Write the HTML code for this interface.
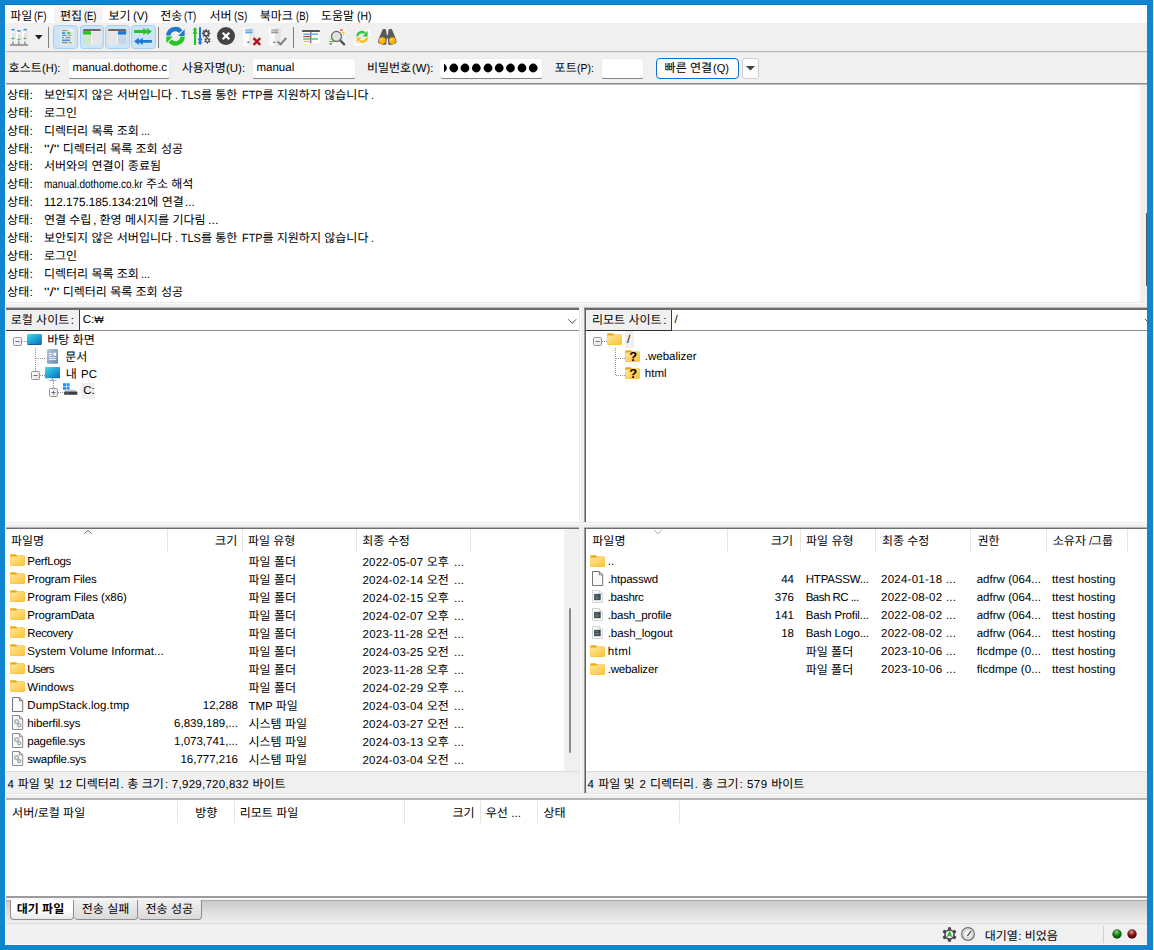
<!DOCTYPE html>
<html lang="ko"><head><meta charset="utf-8"><title>FileZilla</title>
<style>
html,body{margin:0;padding:0}
body{width:1154px;height:950px;overflow:hidden;position:relative;background:#1185cf;font-family:"Liberation Sans","Noto Sans CJK KR",sans-serif;font-size:11.5px;color:#000;text-rendering:geometricPrecision}
.b{position:absolute;box-sizing:border-box}
.t{position:absolute;white-space:nowrap;height:16px;line-height:16px;font-size:11.5px}
.k{display:inline-block;vertical-align:baseline;white-space:nowrap;letter-spacing:0;line-height:16px;font-size:12px;font-family:"Liberation Sans","Noto Sans CJK KR",sans-serif}
.lg{font-size:12px}
.lx{display:inline-block;transform-origin:0 50%}
.bd{font-weight:bold}
.mn{font-size:12px}
svg{overflow:visible}
</style></head><body>
<div class="b " style="left:0px;top:4px;width:1154px;height:1px;background:#0a7ccb;"></div>
<div class="b " style="left:5px;top:5px;width:1142px;height:940px;background:#ffffff;"></div>
<div class="b " style="left:1153px;top:0px;width:1px;height:950px;background:#d7e9f6;"></div>
<div class="b " style="left:53.5px;top:6.5px;width:49px;height:16.5px;background:#f3f3f3;border-radius:3px"></div>
<div class="t mn" style="top:8.0px;left:10.3px;"><span class="k" style="width:24.1px">파일</span><span class="lx" style="transform:scaleX(0.822);margin-right:-2.72px">(F)</span></div>
<div class="t mn" style="top:8.0px;left:60.0px;"><span class="k" style="width:24.1px">편집</span><span class="lx" style="transform:scaleX(0.780);margin-right:-3.52px">(E)</span></div>
<div class="t mn" style="top:8.0px;left:108.5px;"><span class="k" style="width:24.1px">보기</span><span class="lx" style="transform:scaleX(0.938);margin-right:-0.99px">(V)</span></div>
<div class="t mn" style="top:8.0px;left:160.2px;"><span class="k" style="width:24.1px">전송</span><span class="lx" style="transform:scaleX(0.790);margin-right:-3.22px">(T)</span></div>
<div class="t mn" style="top:8.0px;left:209.5px;"><span class="k" style="width:24.1px">서버</span><span class="lx" style="transform:scaleX(0.832);margin-right:-2.69px">(S)</span></div>
<div class="t mn" style="top:8.0px;left:259.7px;"><span class="k" style="width:36.2px">북마크</span><span class="lx" style="transform:scaleX(0.788);margin-right:-3.39px">(B)</span></div>
<div class="t mn" style="top:8.0px;left:321.0px;"><span class="k" style="width:36.2px">도움말</span><span class="lx" style="transform:scaleX(0.864);margin-right:-2.26px">(H)</span></div>
<div class="b " style="left:6px;top:23px;width:1141px;height:28px;background:#f0f0f0;"></div>
<div class="b " style="left:6px;top:51px;width:1141px;height:1px;background:#b8b8b8;"></div>
<div class="b " style="left:6px;top:52px;width:1141px;height:1px;background:#e4e4e4;"></div>
<svg class="b" style="left:10px;top:28px;" width="18" height="18" viewBox="0 0 18 18"><rect x="0.2" y="0.1" width="5.4" height="11.2" fill="#fdfdfd"/><rect x="3.8000000000000003" y="0.1" width="1.8" height="11.2" fill="#e4e4e4"/><ellipse cx="2.9000000000000004" cy="1.7000000000000002" rx="1.9" ry="0.9" fill="#3f8fe3"/><path d="M2.9000000000000004 5.1V9.4" stroke="#9a9a9a" stroke-width="0.6"/><path d="M0.5 10.4H5.4" stroke="#b5b5b5" stroke-width="0.7"/><circle cx="2.9000000000000004" cy="10.4" r="1" fill="#2fc443"/><path d="M2.9000000000000004 13.4V16.4" stroke="#6a6a6a" stroke-width="1.1"/><rect x="6.1" y="1.3" width="5.4" height="11.2" fill="#fdfdfd"/><rect x="9.7" y="1.3" width="1.8" height="11.2" fill="#e4e4e4"/><ellipse cx="8.8" cy="2.9000000000000004" rx="1.9" ry="0.9" fill="#3f8fe3"/><path d="M8.8 6.3V10.600000000000001" stroke="#9a9a9a" stroke-width="0.6"/><path d="M6.3999999999999995 11.600000000000001H11.3" stroke="#b5b5b5" stroke-width="0.7"/><circle cx="8.8" cy="11.600000000000001" r="1" fill="#2fc443"/><path d="M8.8 13.4V16.4" stroke="#6a6a6a" stroke-width="1.1"/><rect x="12.3" y="0.1" width="5.4" height="11.2" fill="#fdfdfd"/><rect x="15.9" y="0.1" width="1.8" height="11.2" fill="#e4e4e4"/><ellipse cx="15.0" cy="1.7000000000000002" rx="1.9" ry="0.9" fill="#3f8fe3"/><path d="M15.0 5.1V9.4" stroke="#9a9a9a" stroke-width="0.6"/><path d="M12.600000000000001 10.4H17.5" stroke="#b5b5b5" stroke-width="0.7"/><circle cx="15.0" cy="10.4" r="1" fill="#2fc443"/><path d="M15.0 13.4V16.4" stroke="#6a6a6a" stroke-width="1.1"/><rect x="0" y="16.2" width="18" height="1.6" fill="#8d8d8d"/></svg>
<svg class="b" style="left:35px;top:34.8px;" width="8" height="5" viewBox="0 0 8 5"><path d="M0 0H7.6L3.8 4.4Z" fill="#1e1e1e"/></svg>
<div class="b " style="left:48px;top:27px;width:1px;height:20.5px;background:#7e7e7e;"></div>
<div class="b " style="left:158px;top:27px;width:1px;height:20.5px;background:#7e7e7e;"></div>
<div class="b " style="left:293px;top:27px;width:1px;height:20.5px;background:#7e7e7e;"></div>
<div class="b " style="left:53.3px;top:25px;width:25.2px;height:23.5px;background:#cce4f7;border:1px solid #a3d0f7;border-radius:3.5px"></div>
<div class="b " style="left:79.7px;top:25px;width:24.6px;height:23.5px;background:#cce4f7;border:1px solid #a3d0f7;border-radius:3.5px"></div>
<div class="b " style="left:105.2px;top:25px;width:24.5px;height:23.5px;background:#cce4f7;border:1px solid #a3d0f7;border-radius:3.5px"></div>
<div class="b " style="left:130.8px;top:25px;width:24.9px;height:23.5px;background:#cce4f7;border:1px solid #a3d0f7;border-radius:3.5px"></div>
<svg class="b" style="left:60px;top:27.9px;" width="15" height="18" viewBox="0 0 15 18"><path d="M0.2 0.6Q0.2 0 0.8 0H11L14.3 3.3V17Q14.3 17.7 13.7 17.7H0.8Q0.2 17.7 0.2 17Z" fill="#e6e6e6"/><path d="M11 0V3.3H14.3Z" fill="#f8f8f8"/><path d="M2 2.6H7.6" stroke="#8a8a8a" stroke-width="1"/><path d="M2 5.1H5.2" stroke="#3f8fe3" stroke-width="1.9"/><path d="M6.9 5.1H10.4" stroke="#35d04a" stroke-width="1.9"/><path d="M2 7.4H6.7" stroke="#3f8fe3" stroke-width="1.1"/><path d="M8.2 7.4H11.4" stroke="#8a8a8a" stroke-width="1"/><path d="M2 9.7H3.9" stroke="#2fc443" stroke-width="1.2"/><path d="M5.7 9.7H10.2" stroke="#777" stroke-width="1"/><path d="M2 12.3H10.2" stroke="#3f8fe3" stroke-width="1.6"/><path d="M2 14.7H7.7" stroke="#6f6f6f" stroke-width="1"/><path d="M9.1 14.7H11.6" stroke="#2fc443" stroke-width="1.2"/></svg>
<svg class="b" style="left:83px;top:28.9px;" width="18" height="15.4" viewBox="0 0 18 15.4"><rect x="0" y="0" width="17.9" height="15.3" rx="1.2" fill="#fff"/><path d="M0 1.2Q0 0 1.2 0H16.7Q17.9 0 17.9 1.2V1.9H0Z" fill="#6a6a6a"/><rect x="0" y="2.1" width="8" height="3.6" fill="#24c524"/><rect x="0" y="6.3" width="8" height="9" fill="#cfe5c9"/><rect x="8.8" y="2.1" width="9.1" height="13.2" fill="#e7e7e7"/></svg>
<svg class="b" style="left:108.3px;top:28.9px;" width="18.3" height="15.4" viewBox="0 0 18.3 15.4"><rect x="0" y="0" width="18.2" height="15.3" rx="1.2" fill="#fff"/><path d="M0 1.2Q0 0 1.2 0H17Q18.2 0 18.2 1.2V1.9H0Z" fill="#6a6a6a"/><rect x="0" y="2.1" width="9" height="13.2" fill="#e7e7e7"/><rect x="9.8" y="2.1" width="8.4" height="3.6" fill="#1f78d1"/><rect x="9.8" y="6.3" width="8.4" height="9" fill="#c6d6e6"/></svg>
<svg class="b" style="left:133.9px;top:28.2px;" width="18" height="17" viewBox="0 0 18 17"><path d="M0 2.1H9.2V0L13 2.6V0L17.9 3.55L13 7.1V4.5L9.2 7.1V5H0Z" fill="#24c524"/><path d="M17.9 11.9H8.7V9.8L4.9 12.4V9.8L0 13.35L4.9 16.9V14.3L8.7 16.9V14.8H17.9Z" fill="#1f78d1"/></svg>
<svg class="b" style="left:165.5px;top:27.3px;" width="19" height="18.4" viewBox="0 0 19 18.4"><path d="M2.4 8.7A7 7 0 0 1 14.8 4.6" fill="none" stroke="#1f78d1" stroke-width="4.4"/><path d="M18.7 2.2V8.9H12.2Z" fill="#1f78d1"/><path d="M16.6 9.7A7 7 0 0 1 4.2 13.8" fill="none" stroke="#24c524" stroke-width="4.4"/><path d="M0.3 16.2V9.5H6.8Z" fill="#24c524"/></svg>
<svg class="b" style="left:191.5px;top:27.3px;" width="20" height="18.4" viewBox="0 0 20 18.4"><path d="M3.05 0L5.5 3.2H4.1V4L5.5 6.8H4.1V18H2V6.8H0.6L2 4V3.2H0.6Z" fill="#24c524"/><path d="M8.05 18.2L5.6 15H7V14.2L5.6 11.4H7V0.2H9.1V11.4H10.5L9.1 14.2V15H10.5Z" fill="#1f78d1"/><g transform="translate(14.2 6.4)"><rect x="-0.8" y="-4.2" width="1.6" height="2" transform="rotate(0)" fill="#4a4a4a"/><rect x="-0.8" y="-4.2" width="1.6" height="2" transform="rotate(45)" fill="#4a4a4a"/><rect x="-0.8" y="-4.2" width="1.6" height="2" transform="rotate(90)" fill="#4a4a4a"/><rect x="-0.8" y="-4.2" width="1.6" height="2" transform="rotate(135)" fill="#4a4a4a"/><rect x="-0.8" y="-4.2" width="1.6" height="2" transform="rotate(180)" fill="#4a4a4a"/><rect x="-0.8" y="-4.2" width="1.6" height="2" transform="rotate(225)" fill="#4a4a4a"/><rect x="-0.8" y="-4.2" width="1.6" height="2" transform="rotate(270)" fill="#4a4a4a"/><rect x="-0.8" y="-4.2" width="1.6" height="2" transform="rotate(315)" fill="#4a4a4a"/><circle r="2.9" fill="#4a4a4a"/><circle r="1.5" fill="#f0f0f0"/></g><g transform="translate(15.4 13.4)"><rect x="-0.7" y="-3.2" width="1.4" height="1.6" transform="rotate(0)" fill="#4a4a4a"/><rect x="-0.7" y="-3.2" width="1.4" height="1.6" transform="rotate(60)" fill="#4a4a4a"/><rect x="-0.7" y="-3.2" width="1.4" height="1.6" transform="rotate(120)" fill="#4a4a4a"/><rect x="-0.7" y="-3.2" width="1.4" height="1.6" transform="rotate(180)" fill="#4a4a4a"/><rect x="-0.7" y="-3.2" width="1.4" height="1.6" transform="rotate(240)" fill="#4a4a4a"/><rect x="-0.7" y="-3.2" width="1.4" height="1.6" transform="rotate(300)" fill="#4a4a4a"/><circle r="2.2" fill="#4a4a4a"/><circle r="1.1" fill="#f0f0f0"/></g></svg>
<svg class="b" style="left:217.3px;top:27.4px;" width="18" height="18" viewBox="0 0 18 18"><circle cx="9" cy="9" r="9" fill="#444"/><path d="M5.7 5.7L12.3 12.3M12.3 5.7L5.7 12.3" stroke="#fff" stroke-width="2.3"/></svg>
<svg class="b" style="left:243.2px;top:28.2px;" width="19" height="18" viewBox="0 0 19 18"><rect x="0" y="0" width="12.5" height="18" fill="#fcfcfc"/><rect x="6" y="0" width="6.5" height="18" fill="#e9e9e9"/><path d="M2.2 2H9.4" stroke="#5da3ea" stroke-width="1.3"/><path d="M2.2 4.4H9.4" stroke="#5da3ea" stroke-width="1.9"/><path d="M4.4 14.3H6.2" stroke="#444" stroke-width="1.2"/><path d="M10.6 10.2L17.2 16.8M17.2 10.2L10.6 16.8" stroke="#b5121b" stroke-width="2.4"/></svg>
<svg class="b" style="left:269px;top:28.2px;" width="19" height="18" viewBox="0 0 19 18"><rect x="0" y="0" width="12.5" height="18" fill="#fafafa"/><rect x="6" y="0" width="6.5" height="18" fill="#e6e6e6"/><path d="M2.2 2H9.4" stroke="#9a9a9a" stroke-width="1.3"/><path d="M2.2 4.4H9.4" stroke="#9a9a9a" stroke-width="1.9"/><path d="M4.4 14.3H6.2" stroke="#555" stroke-width="1.2"/><path d="M8.6 13.6L11.6 16.4L17.2 10" fill="none" stroke="#7d7d7d" stroke-width="2"/></svg>
<svg class="b" style="left:302px;top:29.8px;" width="18.2" height="13.6" viewBox="0 0 18.2 13.6"><rect x="0" y="0.5" width="18" height="12.8" rx="1" fill="#fff"/><path d="M0 1.4Q0 0 1.2 0H16.8Q18 0 18 1.4V2.1H0Z" fill="#555"/><path d="M8.8 1.8V13.3" stroke="#444" stroke-width="1"/><path d="M1.2 4.2H16" stroke="#5da3ea" stroke-width="1.4"/><path d="M1.2 6.6H8.4" stroke="#c62a33" stroke-width="1.1"/><path d="M1.2 9H16" stroke="#4cc94f" stroke-width="1.5"/><path d="M1.2 11.5H8.4" stroke="#fbb900" stroke-width="1.2"/></svg>
<svg class="b" style="left:327.5px;top:27.6px;" width="19" height="18.5" viewBox="0 0 19 18.5"><rect x="10.8" y="0.3" width="7.4" height="8.2" fill="#fdfdfd" stroke="#e2e2e2" stroke-width="0.5"/><path d="M12 2H14.8" stroke="#c62a33" stroke-width="1.2"/><path d="M13.6 4.3H17" stroke="#fbc02d" stroke-width="1.3"/><path d="M14.8 6.4H16.4" stroke="#4cc94f" stroke-width="1.1"/><rect x="0.3" y="9.6" width="8.6" height="8.6" fill="#fdfdfd" stroke="#e2e2e2" stroke-width="0.5"/><path d="M1.2 11.2H3.4" stroke="#fbc02d" stroke-width="1.2"/><path d="M1.2 13.6H6" stroke="#2fc443" stroke-width="1.3"/><path d="M1.6 16H4" stroke="#c62a33" stroke-width="1.3"/><circle cx="8.5" cy="8.4" r="5" fill="#e2e2e2" stroke="#6b6b6b" stroke-width="1.3"/><path d="M12.3 12.4L16.8 17" stroke="#4a4a4a" stroke-width="2.2"/></svg>
<svg class="b" style="left:353px;top:27.6px;" width="19" height="18.5" viewBox="0 0 19 18.5"><rect x="9.6" y="0.3" width="8.8" height="8.2" fill="#fdfdfd" stroke="#e2e2e2" stroke-width="0.5"/><path d="M11.6 2H14.4M11.6 4H15.8" stroke="#dedede" stroke-width="0.8"/><rect x="0.2" y="9.6" width="8.8" height="8.6" fill="#fdfdfd" stroke="#e2e2e2" stroke-width="0.5"/><path d="M1.6 12.4H5M1.6 15.2H6" stroke="#dedede" stroke-width="0.8"/><path d="M4.4 8.2A4.6 4.6 0 0 1 12 5.2" fill="none" stroke="#2fc443" stroke-width="2.3"/><path d="M14.6 3V8.4H9.4Z" fill="#2fc443"/><path d="M13.8 9.6A4.6 4.6 0 0 1 6.2 12.6" fill="none" stroke="#fbbd18" stroke-width="2.3"/><path d="M3.6 14.8V9.4H8.8Z" fill="#fbbd18"/></svg>
<svg class="b" style="left:378.4px;top:28.6px;" width="18.6" height="15.8" viewBox="0 0 18.6 15.8"><path d="M4.2 1.4Q4.5 0 5.8 0H6.6Q8 0 8.2 1.4L8.8 6H9.8L10.4 1.4Q10.6 0 12 0H12.8Q14.1 0 14.4 1.4L18.2 10.4Q18.9 12.6 17.8 14.2L14 15.7H10.4L9.8 9.2H8.8L8.2 15.7H4.6L0.8 14.2Q-0.3 12.6 0.4 10.4Z" fill="#5a5a5a"/><circle cx="4.2" cy="11.6" r="3.4" fill="#fbb400"/><circle cx="14.4" cy="11.6" r="3.4" fill="#fbb400"/><circle cx="3.3" cy="10.6" r="1.1" fill="#ffe07a"/><circle cx="13.5" cy="10.6" r="1.1" fill="#ffe07a"/></svg>
<div class="b " style="left:6px;top:53px;width:1141px;height:30px;background:#f0f0f0;"></div>
<div class="b " style="left:6px;top:83px;width:1141px;height:1px;background:#8c8c8c;"></div>
<div class="b " style="left:6px;top:84px;width:1141px;height:1px;background:#bdbdbd;"></div>
<div class="t " style="top:60.0px;left:8.6px;"><span class="k" style="width:33.6px">호스트</span><span class="lx" style="transform:scaleX(0.960);margin-right:-0.77px">(H):</span></div>
<div class="b " style="left:68px;top:57.5px;width:102px;height:21px;background:#ffffff;border:1px solid #ececec;border-bottom:1px solid #868686;border-radius:3px"></div>
<div class="t " style="top:60.0px;left:72.5px;">manual.dothome.c</div>
<div class="t " style="top:60.0px;left:181.7px;"><span class="k" style="width:44.8px">사용자명</span><span class="lx" style="transform:scaleX(0.996);margin-right:-0.07px">(U):</span></div>
<div class="b " style="left:251.5px;top:57.5px;width:104px;height:21px;background:#ffffff;border:1px solid #ececec;border-bottom:1px solid #868686;border-radius:3px"></div>
<div class="t " style="top:60.0px;left:256.5px;">manual</div>
<div class="t " style="top:60.0px;left:367.0px;"><span class="k" style="width:44.8px">비밀번호</span><span class="lx" style="transform:scaleX(0.985);margin-right:-0.32px">(W):</span></div>
<div class="b " style="left:439.5px;top:57.5px;width:103.5px;height:21px;background:#ffffff;border:1px solid #ececec;border-bottom:1px solid #868686;border-radius:3px"></div>
<svg class="b" style="left:440px;top:57.5px;overflow:hidden" width="102" height="20" viewBox="0 0 102 20"><g fill="#000"><circle cx="2.5" cy="10" r="4.4"/><circle cx="13.8" cy="10" r="4.4"/><circle cx="25.0" cy="10" r="4.4"/><circle cx="36.3" cy="10" r="4.4"/><circle cx="48.0" cy="10" r="4.4"/><circle cx="59.2" cy="10" r="4.4"/><circle cx="70.5" cy="10" r="4.4"/><circle cx="82.0" cy="10" r="4.4"/><circle cx="93.2" cy="10" r="4.4"/></g><rect x="0" y="2" width="4" height="16" fill="#fff"/></svg>
<div class="t " style="top:60.0px;left:554.6px;"><span class="k" style="width:22.4px">포트</span><span class="lx" style="transform:scaleX(0.918);margin-right:-1.52px">(P):</span></div>
<div class="b " style="left:600.5px;top:57.5px;width:43px;height:21px;background:#ffffff;border:1px solid #ececec;border-bottom:1px solid #868686;border-radius:3px"></div>
<div class="b " style="left:655.5px;top:57.5px;width:83.5px;height:21px;background:#fdfdfd;border:1.5px solid #0a6fc9;border-radius:4px"></div>
<div class="t " style="top:60.0px;left:664.6px;"><span class="k" style="width:48.8px">빠른 연결</span><span class="lx" style="transform:scaleX(0.963);margin-right:-0.61px">(Q)</span></div>
<div class="b " style="left:741.5px;top:57.5px;width:17px;height:21px;background:#fdfdfd;border:1px solid #d0d0d0;border-radius:3px"></div>
<svg class="b" style="left:745.5px;top:65.5px;" width="9" height="5" viewBox="0 0 9 5"><path d="M0 0H9L4.5 4.6Z" fill="#444"/></svg>
<div class="b " style="left:1140px;top:85px;width:7px;height:217px;background:#f0f0f0;"></div>
<div class="b " style="left:1146px;top:213px;width:1px;height:73px;background:#5a5a5a;"></div>
<div class="t lg" style="top:87.0px;left:7.1px;"><span class="k" style="width:22.4px">상태</span>:</div>
<div class="t lg" style="top:87.0px;left:43.9px;"><span class="k" style="width:131.2px">보안되지 않은 서버입니다</span><span class="lx" style="transform:scaleX(0.906);margin-right:-2.67px">. TLS</span><span class="k" style="width:37.6px">를 통한</span> <span class="lx" style="transform:scaleX(0.906);margin-right:-2.12px">FTP</span><span class="k" style="width:108.8px">를 지원하지 않습니다</span><span class="lx" style="transform:scaleX(0.906);margin-right:-0.31px">.</span></div>
<div class="t lg" style="top:105.0px;left:7.1px;"><span class="k" style="width:22.4px">상태</span>:</div>
<div class="t lg" style="top:105.0px;left:43.9px;"><span class="k" style="width:33.6px">로그인</span></div>
<div class="t lg" style="top:123.0px;left:7.1px;"><span class="k" style="width:22.4px">상태</span>:</div>
<div class="t lg" style="top:123.0px;left:43.9px;"><span class="k" style="width:97.6px">디렉터리 목록 조회</span><span class="lx" style="transform:scaleX(0.909);margin-right:-0.91px">...</span></div>
<div class="t lg" style="top:141.0px;left:7.1px;"><span class="k" style="width:22.4px">상태</span>:</div>
<div class="t lg" style="top:141.0px;left:43.9px;"><span class="lx" style="transform:scaleX(1.300);margin-right:3.56px">"/"</span> <span class="k" style="width:124.0px">디렉터리 목록 조회 성공</span></div>
<div class="t lg" style="top:158.0px;left:7.1px;"><span class="k" style="width:22.4px">상태</span>:</div>
<div class="t lg" style="top:158.0px;left:43.9px;"><span class="k" style="width:120.0px">서버와의 연결이 종료됨</span></div>
<div class="t lg" style="top:176.0px;left:7.1px;"><span class="k" style="width:22.4px">상태</span>:</div>
<div class="t lg" style="top:176.0px;left:43.9px;"><span class="lx" style="transform:scaleX(0.831);margin-right:-20.08px">manual.dothome.co.kr</span> <span class="k" style="width:48.8px">주소 해석</span></div>
<div class="t lg" style="top:194.0px;left:7.1px;"><span class="k" style="width:22.4px">상태</span>:</div>
<div class="t lg" style="top:194.0px;left:43.9px;"><span class="lx" style="transform:scaleX(0.977);margin-right:-2.47px">112.175.185.134:21</span><span class="k" style="width:37.6px">에 연결</span><span class="lx" style="transform:scaleX(0.977);margin-right:-0.23px">...</span></div>
<div class="t lg" style="top:212.0px;left:7.1px;"><span class="k" style="width:22.4px">상태</span>:</div>
<div class="t lg" style="top:212.0px;left:43.9px;"><span class="k" style="width:48.8px">연결 수립</span><span class="lx" style="transform:scaleX(1.060);margin-right:0.20px">,</span> <span class="k" style="width:108.8px">환영 메시지를 기다림</span><span class="lx" style="transform:scaleX(1.060);margin-right:0.60px">...</span></div>
<div class="t lg" style="top:230.0px;left:7.1px;"><span class="k" style="width:22.4px">상태</span>:</div>
<div class="t lg" style="top:230.0px;left:43.9px;"><span class="k" style="width:131.2px">보안되지 않은 서버입니다</span><span class="lx" style="transform:scaleX(0.906);margin-right:-2.67px">. TLS</span><span class="k" style="width:37.6px">를 통한</span> <span class="lx" style="transform:scaleX(0.906);margin-right:-2.12px">FTP</span><span class="k" style="width:108.8px">를 지원하지 않습니다</span><span class="lx" style="transform:scaleX(0.906);margin-right:-0.31px">.</span></div>
<div class="t lg" style="top:248.0px;left:7.1px;"><span class="k" style="width:22.4px">상태</span>:</div>
<div class="t lg" style="top:248.0px;left:43.9px;"><span class="k" style="width:33.6px">로그인</span></div>
<div class="t lg" style="top:266.0px;left:7.1px;"><span class="k" style="width:22.4px">상태</span>:</div>
<div class="t lg" style="top:266.0px;left:43.9px;"><span class="k" style="width:97.6px">디렉터리 목록 조회</span><span class="lx" style="transform:scaleX(0.909);margin-right:-0.91px">...</span></div>
<div class="t lg" style="top:284.0px;left:7.1px;"><span class="k" style="width:22.4px">상태</span>:</div>
<div class="t lg" style="top:284.0px;left:43.9px;"><span class="lx" style="transform:scaleX(1.300);margin-right:3.56px">"/"</span> <span class="k" style="width:124.0px">디렉터리 목록 조회 성공</span></div>
<div class="b " style="left:6px;top:302px;width:1141px;height:6px;background:#f0f0f0;"></div>
<div class="b " style="left:6px;top:302px;width:1141px;height:1px;background:#e9e9e9;"></div>
<div class="b " style="left:6px;top:303px;width:1141px;height:1px;background:#fbfbfb;"></div>
<div class="b " style="left:6px;top:307px;width:573px;height:1px;background:#bdbdbd;"></div>
<div class="b " style="left:6px;top:308px;width:573px;height:2px;background:#6c6c6c;"></div>
<div class="b " style="left:584px;top:307px;width:563px;height:1px;background:#bdbdbd;"></div>
<div class="b " style="left:584px;top:308px;width:563px;height:2px;background:#6c6c6c;"></div>
<div class="b " style="left:6px;top:310px;width:73px;height:20px;background:#f0f0f0;"></div>
<div class="t " style="top:312.0px;left:10.7px;"><span class="k" style="width:60.0px">로컬 사이트</span>:</div>
<div class="b " style="left:6px;top:330px;width:573px;height:1px;background:#8c8c8c;"></div>
<div class="b " style="left:6px;top:330px;width:74px;height:1px;background:#2e2e2e;"></div>
<div class="b " style="left:79px;top:310px;width:1px;height:21px;background:#3c3c3c;"></div>
<div class="t " style="top:312.0px;left:82.8px;">C:<span style="font-size:10px;font-weight:100">₩</span></div>
<svg class="b" style="left:568px;top:318.5px;" width="8.5" height="5" viewBox="0 0 8.5 5"><path d="M0.3 0.3L4.2 4.3L8.2 0.3" fill="none" stroke="#555" stroke-width="1"/></svg>
<div class="b " style="left:579px;top:307px;width:5px;height:491px;background:#f0f0f0;"></div>
<div class="b " style="left:579px;top:309px;width:1px;height:489px;background:#e9e9e9;"></div>
<div class="b " style="left:580px;top:309px;width:1px;height:489px;background:#fbfbfb;"></div>
<div class="b " style="left:584px;top:309px;width:1px;height:213px;background:#a0a0a0;"></div>
<div class="b " style="left:585px;top:309px;width:1px;height:213px;background:#5f5f5f;"></div>
<div class="b " style="left:586px;top:310px;width:85px;height:20px;background:#f0f0f0;"></div>
<div class="t " style="top:312.0px;left:592.0px;"><span class="k" style="width:71.2px">리모트 사이트</span>:</div>
<div class="b " style="left:586px;top:330px;width:561px;height:1px;background:#8c8c8c;"></div>
<div class="b " style="left:586px;top:330px;width:86px;height:1px;background:#2e2e2e;"></div>
<div class="b " style="left:671px;top:310px;width:1px;height:21px;background:#3c3c3c;"></div>
<div class="t " style="top:312.0px;left:674.4px;">/</div>
<svg class="b" style="left:1145px;top:319px;overflow:hidden" width="4" height="5" viewBox="0 0 4 5"><path d="M0 0L4 4" fill="none" stroke="#555" stroke-width="1"/></svg>
<svg class="b" style="left:12.5px;top:336.7px;" width="9" height="9" viewBox="0 0 9 9"><defs><linearGradient id="eg1" x1="0" y1="0" x2="1" y2="1"><stop offset="0" stop-color="#fff"/><stop offset="1" stop-color="#e6e3da"/></linearGradient></defs><rect x="0.5" y="0.5" width="8" height="8" rx="1" fill="url(#eg1)" stroke="#959595" stroke-width="1"/><path d="M2.4 4.5H6.6" stroke="#5b6fb5" stroke-width="1"/></svg>
<div class="b " style="left:22px;top:341px;width:5px;height:1px;background:repeating-linear-gradient(90deg,#8f8f8f 0 1px,transparent 1px 2px)"></div>
<svg class="b" style="left:27px;top:334.1px;" width="15" height="11.2" viewBox="0 0 15 11.2"><defs><linearGradient id="dk" x1="0" y1="0" x2="1" y2="1"><stop offset="0" stop-color="#3be0e6"/><stop offset="0.5" stop-color="#1fa4d6"/><stop offset="1" stop-color="#0868bd"/></linearGradient></defs><rect x="0" y="0" width="14.9" height="10.6" rx="1.2" fill="url(#dk)"/><rect x="0.4" y="10" width="14.1" height="1" rx="0.5" fill="#0a5ea8"/></svg>
<div class="t " style="top:332.0px;left:47.3px;"><span class="k" style="width:51.2px">바탕 화면</span></div>
<div class="b " style="left:35px;top:348px;width:1px;height:24px;background:repeating-linear-gradient(180deg,#8f8f8f 0 1px,transparent 1px 2px)"></div>
<div class="b " style="left:36px;top:358px;width:10px;height:1px;background:repeating-linear-gradient(90deg,#8f8f8f 0 1px,transparent 1px 2px)"></div>
<svg class="b" style="left:47px;top:349.2px;" width="11.2" height="14.8" viewBox="0 0 11.2 14.8"><defs><linearGradient id="dc" x1="0" y1="0" x2="1" y2="1"><stop offset="0" stop-color="#b3c6de"/><stop offset="1" stop-color="#6688b0"/></linearGradient></defs><rect x="0" y="0" width="11" height="14.7" rx="1" fill="url(#dc)"/><path d="M1.8 4.4H5.2M1.8 6.4H5.2M1.8 8.6H9.2M1.8 10.6H9.2" stroke="#fff" stroke-width="0.9"/><rect x="6.4" y="3.7" width="2.8" height="3" fill="#fff"/></svg>
<div class="t " style="top:349.0px;left:65.3px;"><span class="k" style="width:24.1px">문서</span></div>
<svg class="b" style="left:30.7px;top:370.7px;" width="9" height="9" viewBox="0 0 9 9"><defs><linearGradient id="eg2" x1="0" y1="0" x2="1" y2="1"><stop offset="0" stop-color="#fff"/><stop offset="1" stop-color="#e6e3da"/></linearGradient></defs><rect x="0.5" y="0.5" width="8" height="8" rx="1" fill="url(#eg2)" stroke="#959595" stroke-width="1"/><path d="M2.4 4.5H6.6" stroke="#5b6fb5" stroke-width="1"/></svg>
<div class="b " style="left:40px;top:375px;width:5px;height:1px;background:repeating-linear-gradient(90deg,#8f8f8f 0 1px,transparent 1px 2px)"></div>
<svg class="b" style="left:45px;top:367.2px;" width="15.4" height="14.4" viewBox="0 0 15.4 14.4"><defs><linearGradient id="pc" x1="0" y1="0" x2="1" y2="1"><stop offset="0" stop-color="#3be0e6"/><stop offset="0.5" stop-color="#1fa4d6"/><stop offset="1" stop-color="#0868bd"/></linearGradient></defs><rect x="0" y="0" width="15" height="11.2" rx="0.8" fill="url(#pc)"/><path d="M7.5 11.2V13.2" stroke="#8aa0b8" stroke-width="1.6"/><path d="M3.6 13.5H11.4" stroke="#9fb3c8" stroke-width="1"/></svg>
<div class="t " style="top:366.0px;left:65.7px;"><span class="k" style="width:12.1px">내</span> PC</div>
<div class="b " style="left:53px;top:381px;width:1px;height:8px;background:repeating-linear-gradient(180deg,#8f8f8f 0 1px,transparent 1px 2px)"></div>
<svg class="b" style="left:48.5px;top:387.9px;" width="9" height="9" viewBox="0 0 9 9"><defs><linearGradient id="eg3" x1="0" y1="0" x2="1" y2="1"><stop offset="0" stop-color="#fff"/><stop offset="1" stop-color="#e6e3da"/></linearGradient></defs><rect x="0.5" y="0.5" width="8" height="8" rx="1" fill="url(#eg3)" stroke="#959595" stroke-width="1"/><path d="M2.4 4.5H6.6" stroke="#5b6fb5" stroke-width="1"/><path d="M4.5 2.6V6.4" stroke="#5b6fb5" stroke-width="1"/></svg>
<div class="b " style="left:58px;top:392px;width:5px;height:1px;background:repeating-linear-gradient(90deg,#8f8f8f 0 1px,transparent 1px 2px)"></div>
<svg class="b" style="left:62.9px;top:383px;" width="14.6" height="12" viewBox="0 0 14.6 12"><rect x="0" y="0.2" width="3" height="3" fill="#1e90ff"/><rect x="3.6" y="0.2" width="3" height="3" fill="#1e90ff"/><rect x="0" y="3.8" width="3" height="3" fill="#1e90ff"/><rect x="3.6" y="3.8" width="3" height="3" fill="#1e90ff"/><path d="M1.2 8.6L3.4 6.6H11.2L14.3 8.6Z" fill="#c9c9c9"/><rect x="1.2" y="8.6" width="13.1" height="3.2" rx="0.5" fill="#3c3c3c"/><rect x="3.6" y="9.6" width="1.8" height="0.9" fill="#35d04a"/></svg>
<div class="b " style="left:81px;top:382.5px;width:14px;height:16.5px;background:#f0f0f0;"></div>
<div class="t " style="top:383.0px;left:83.2px;">C:</div>
<svg class="b" style="left:592.8px;top:336.7px;" width="9" height="9" viewBox="0 0 9 9"><defs><linearGradient id="eg4" x1="0" y1="0" x2="1" y2="1"><stop offset="0" stop-color="#fff"/><stop offset="1" stop-color="#e6e3da"/></linearGradient></defs><rect x="0.5" y="0.5" width="8" height="8" rx="1" fill="url(#eg4)" stroke="#959595" stroke-width="1"/><path d="M2.4 4.5H6.6" stroke="#5b6fb5" stroke-width="1"/></svg>
<div class="b " style="left:602px;top:341px;width:5px;height:1px;background:repeating-linear-gradient(90deg,#8f8f8f 0 1px,transparent 1px 2px)"></div>
<svg class="b" style="left:607px;top:333.1px;" width="15" height="12" viewBox="0 0 15 12"><defs><linearGradient id="fg5" x1="0" y1="0" x2="1" y2="1"><stop offset="0" stop-color="#ffe69c"/><stop offset="1" stop-color="#fcc436"/></linearGradient></defs><path d="M0.2 1.2Q0.2 0.2 1.2 0.2H5.2Q6 0.2 6.6 0.9L7.2 1.6H13.8Q14.8 1.6 14.8 2.6V10.8Q14.8 11.8 13.8 11.8H1.2Q0.2 11.8 0.2 10.8Z" fill="#efa80a"/><path d="M0.2 3.4Q0.2 2.6 1.2 2.6H6.2L7.4 1.9H13.8Q14.8 1.9 14.8 2.9V10.6Q14.8 11.4 13.8 11.4H1.2Q0.2 11.4 0.2 10.6Z" fill="url(#fg5)"/></svg>
<div class="b " style="left:625px;top:331.3px;width:8.8px;height:16.7px;background:#f0f0f0;"></div>
<div class="t " style="top:332.0px;left:627.0px;">/</div>
<div class="b " style="left:615px;top:348px;width:1px;height:28px;background:repeating-linear-gradient(180deg,#8f8f8f 0 1px,transparent 1px 2px)"></div>
<div class="b " style="left:616px;top:358px;width:9px;height:1px;background:repeating-linear-gradient(90deg,#8f8f8f 0 1px,transparent 1px 2px)"></div>
<div class="b " style="left:616px;top:375px;width:9px;height:1px;background:repeating-linear-gradient(90deg,#8f8f8f 0 1px,transparent 1px 2px)"></div>
<svg class="b" style="left:625px;top:350.09999999999997px;" width="15" height="12" viewBox="0 0 15 12"><defs><linearGradient id="fg6" x1="0" y1="0" x2="1" y2="1"><stop offset="0" stop-color="#ffe69c"/><stop offset="1" stop-color="#fcc436"/></linearGradient></defs><path d="M0.2 1.2Q0.2 0.2 1.2 0.2H5.2Q6 0.2 6.6 0.9L7.2 1.6H13.8Q14.8 1.6 14.8 2.6V10.8Q14.8 11.8 13.8 11.8H1.2Q0.2 11.8 0.2 10.8Z" fill="#efa80a"/><path d="M0.2 3.4Q0.2 2.6 1.2 2.6H6.2L7.4 1.9H13.8Q14.8 1.9 14.8 2.9V10.6Q14.8 11.4 13.8 11.4H1.2Q0.2 11.4 0.2 10.6Z" fill="url(#fg6)"/></svg>
<div class="t bd" style="top:349.0px;left:629.3px;font-size:13px">?</div>
<div class="t " style="top:349.0px;left:644.8px;">.webalizer</div>
<svg class="b" style="left:625px;top:367.09999999999997px;" width="15" height="12" viewBox="0 0 15 12"><defs><linearGradient id="fg7" x1="0" y1="0" x2="1" y2="1"><stop offset="0" stop-color="#ffe69c"/><stop offset="1" stop-color="#fcc436"/></linearGradient></defs><path d="M0.2 1.2Q0.2 0.2 1.2 0.2H5.2Q6 0.2 6.6 0.9L7.2 1.6H13.8Q14.8 1.6 14.8 2.6V10.8Q14.8 11.8 13.8 11.8H1.2Q0.2 11.8 0.2 10.8Z" fill="#efa80a"/><path d="M0.2 3.4Q0.2 2.6 1.2 2.6H6.2L7.4 1.9H13.8Q14.8 1.9 14.8 2.9V10.6Q14.8 11.4 13.8 11.4H1.2Q0.2 11.4 0.2 10.6Z" fill="url(#fg7)"/></svg>
<div class="t bd" style="top:366.0px;left:629.3px;font-size:13px">?</div>
<div class="t " style="top:366.0px;left:644.8px;">html</div>
<div class="b " style="left:6px;top:522px;width:1141px;height:6px;background:#f0f0f0;"></div>
<div class="b " style="left:6px;top:522px;width:1141px;height:1px;background:#e9e9e9;"></div>
<div class="b " style="left:6px;top:523px;width:1141px;height:1px;background:#fbfbfb;"></div>
<div class="b " style="left:6px;top:527px;width:573px;height:1px;background:#b5b5b5;"></div>
<div class="b " style="left:6px;top:528px;width:573px;height:1px;background:#6e6e6e;"></div>
<div class="b " style="left:584px;top:527px;width:563px;height:1px;background:#b5b5b5;"></div>
<div class="b " style="left:584px;top:528px;width:563px;height:1px;background:#6e6e6e;"></div>
<div class="b " style="left:584px;top:529px;width:1px;height:264px;background:#a0a0a0;"></div>
<div class="b " style="left:585px;top:529px;width:1px;height:264px;background:#5f5f5f;"></div>
<div class="b " style="left:564px;top:529px;width:15px;height:242px;background:#f0f0f0;"></div>
<div class="b " style="left:569px;top:608px;width:2px;height:145px;background:#8a8a8a;border-radius:1px"></div>
<div class="b " style="left:166.5px;top:529px;width:1px;height:23px;background:#e5e5e5;"></div>
<div class="b " style="left:242px;top:529px;width:1px;height:23px;background:#e5e5e5;"></div>
<div class="b " style="left:356px;top:529px;width:1px;height:23px;background:#e5e5e5;"></div>
<div class="b " style="left:470px;top:529px;width:1px;height:23px;background:#e5e5e5;"></div>
<div class="t " style="top:533.0px;left:10.9px;"><span class="k" style="width:36.2px">파일명</span></div>
<div class="t " style="top:533.0px;left:-62.8px;width:300px;text-align:right;"><span class="k" style="width:24.1px">크기</span></div>
<div class="t " style="top:533.0px;left:247.9px;"><span class="k" style="width:51.2px">파일 유형</span></div>
<div class="t " style="top:533.0px;left:362.3px;"><span class="k" style="width:51.2px">최종 수정</span></div>
<svg class="b" style="left:83.5px;top:530px;" width="8" height="4" viewBox="0 0 8 4"><path d="M0.3 3.7L4 0.4L7.7 3.7" fill="none" stroke="#666" stroke-width="1"/></svg>
<svg class="b" style="left:10px;top:554.2px;" width="15" height="12" viewBox="0 0 15 12"><defs><linearGradient id="fg8" x1="0" y1="0" x2="1" y2="1"><stop offset="0" stop-color="#ffe69c"/><stop offset="1" stop-color="#fcc436"/></linearGradient></defs><path d="M0.2 1.2Q0.2 0.2 1.2 0.2H5.2Q6 0.2 6.6 0.9L7.2 1.6H13.8Q14.8 1.6 14.8 2.6V10.8Q14.8 11.8 13.8 11.8H1.2Q0.2 11.8 0.2 10.8Z" fill="#efa80a"/><path d="M0.2 3.4Q0.2 2.6 1.2 2.6H6.2L7.4 1.9H13.8Q14.8 1.9 14.8 2.9V10.6Q14.8 11.4 13.8 11.4H1.2Q0.2 11.4 0.2 10.6Z" fill="url(#fg8)"/></svg>
<div class="t " style="top:554.0px;left:27.3px;letter-spacing:-0.28px;">PerfLogs</div>
<div class="t " style="top:554.0px;left:248.5px;"><span class="k" style="width:51.2px">파일 폴더</span></div>
<div class="t " style="top:554.0px;left:362.5px;letter-spacing:0.19px;">2022-05-07 <span class="k" style="width:24.1px">오후</span> ...</div>
<svg class="b" style="left:10px;top:572.2px;" width="15" height="12" viewBox="0 0 15 12"><defs><linearGradient id="fg9" x1="0" y1="0" x2="1" y2="1"><stop offset="0" stop-color="#ffe69c"/><stop offset="1" stop-color="#fcc436"/></linearGradient></defs><path d="M0.2 1.2Q0.2 0.2 1.2 0.2H5.2Q6 0.2 6.6 0.9L7.2 1.6H13.8Q14.8 1.6 14.8 2.6V10.8Q14.8 11.8 13.8 11.8H1.2Q0.2 11.8 0.2 10.8Z" fill="#efa80a"/><path d="M0.2 3.4Q0.2 2.6 1.2 2.6H6.2L7.4 1.9H13.8Q14.8 1.9 14.8 2.9V10.6Q14.8 11.4 13.8 11.4H1.2Q0.2 11.4 0.2 10.6Z" fill="url(#fg9)"/></svg>
<div class="t " style="top:572.0px;left:27.3px;letter-spacing:-0.18px;">Program Files</div>
<div class="t " style="top:572.0px;left:248.5px;"><span class="k" style="width:51.2px">파일 폴더</span></div>
<div class="t " style="top:572.0px;left:362.5px;letter-spacing:0.19px;">2024-02-14 <span class="k" style="width:24.1px">오전</span> ...</div>
<svg class="b" style="left:10px;top:590.2px;" width="15" height="12" viewBox="0 0 15 12"><defs><linearGradient id="fg10" x1="0" y1="0" x2="1" y2="1"><stop offset="0" stop-color="#ffe69c"/><stop offset="1" stop-color="#fcc436"/></linearGradient></defs><path d="M0.2 1.2Q0.2 0.2 1.2 0.2H5.2Q6 0.2 6.6 0.9L7.2 1.6H13.8Q14.8 1.6 14.8 2.6V10.8Q14.8 11.8 13.8 11.8H1.2Q0.2 11.8 0.2 10.8Z" fill="#efa80a"/><path d="M0.2 3.4Q0.2 2.6 1.2 2.6H6.2L7.4 1.9H13.8Q14.8 1.9 14.8 2.9V10.6Q14.8 11.4 13.8 11.4H1.2Q0.2 11.4 0.2 10.6Z" fill="url(#fg10)"/></svg>
<div class="t " style="top:590.0px;left:27.3px;letter-spacing:-0.08px;">Program Files (x86)</div>
<div class="t " style="top:590.0px;left:248.5px;"><span class="k" style="width:51.2px">파일 폴더</span></div>
<div class="t " style="top:590.0px;left:362.5px;letter-spacing:0.19px;">2024-02-15 <span class="k" style="width:24.1px">오후</span> ...</div>
<svg class="b" style="left:10px;top:608.2px;" width="15" height="12" viewBox="0 0 15 12"><defs><linearGradient id="fg11" x1="0" y1="0" x2="1" y2="1"><stop offset="0" stop-color="#ffe69c"/><stop offset="1" stop-color="#fcc436"/></linearGradient></defs><path d="M0.2 1.2Q0.2 0.2 1.2 0.2H5.2Q6 0.2 6.6 0.9L7.2 1.6H13.8Q14.8 1.6 14.8 2.6V10.8Q14.8 11.8 13.8 11.8H1.2Q0.2 11.8 0.2 10.8Z" fill="#efa80a"/><path d="M0.2 3.4Q0.2 2.6 1.2 2.6H6.2L7.4 1.9H13.8Q14.8 1.9 14.8 2.9V10.6Q14.8 11.4 13.8 11.4H1.2Q0.2 11.4 0.2 10.6Z" fill="url(#fg11)"/></svg>
<div class="t " style="top:608.0px;left:27.3px;letter-spacing:-0.14px;">ProgramData</div>
<div class="t " style="top:608.0px;left:248.5px;"><span class="k" style="width:51.2px">파일 폴더</span></div>
<div class="t " style="top:608.0px;left:362.5px;letter-spacing:0.19px;">2024-02-07 <span class="k" style="width:24.1px">오후</span> ...</div>
<svg class="b" style="left:10px;top:626.2px;" width="15" height="12" viewBox="0 0 15 12"><defs><linearGradient id="fg12" x1="0" y1="0" x2="1" y2="1"><stop offset="0" stop-color="#ffe69c"/><stop offset="1" stop-color="#fcc436"/></linearGradient></defs><path d="M0.2 1.2Q0.2 0.2 1.2 0.2H5.2Q6 0.2 6.6 0.9L7.2 1.6H13.8Q14.8 1.6 14.8 2.6V10.8Q14.8 11.8 13.8 11.8H1.2Q0.2 11.8 0.2 10.8Z" fill="#efa80a"/><path d="M0.2 3.4Q0.2 2.6 1.2 2.6H6.2L7.4 1.9H13.8Q14.8 1.9 14.8 2.9V10.6Q14.8 11.4 13.8 11.4H1.2Q0.2 11.4 0.2 10.6Z" fill="url(#fg12)"/></svg>
<div class="t " style="top:626.0px;left:27.3px;letter-spacing:-0.40px;">Recovery</div>
<div class="t " style="top:626.0px;left:248.5px;"><span class="k" style="width:51.2px">파일 폴더</span></div>
<div class="t " style="top:626.0px;left:362.5px;letter-spacing:0.25px;">2023-11-28 <span class="k" style="width:24.1px">오전</span> ...</div>
<svg class="b" style="left:10px;top:644.2px;" width="15" height="12" viewBox="0 0 15 12"><defs><linearGradient id="fg13" x1="0" y1="0" x2="1" y2="1"><stop offset="0" stop-color="#ffe69c"/><stop offset="1" stop-color="#fcc436"/></linearGradient></defs><path d="M0.2 1.2Q0.2 0.2 1.2 0.2H5.2Q6 0.2 6.6 0.9L7.2 1.6H13.8Q14.8 1.6 14.8 2.6V10.8Q14.8 11.8 13.8 11.8H1.2Q0.2 11.8 0.2 10.8Z" fill="#efa80a"/><path d="M0.2 3.4Q0.2 2.6 1.2 2.6H6.2L7.4 1.9H13.8Q14.8 1.9 14.8 2.9V10.6Q14.8 11.4 13.8 11.4H1.2Q0.2 11.4 0.2 10.6Z" fill="url(#fg13)"/></svg>
<div class="t " style="top:644.0px;left:27.3px;letter-spacing:0.06px;">System Volume Informat...</div>
<div class="t " style="top:644.0px;left:248.5px;"><span class="k" style="width:51.2px">파일 폴더</span></div>
<div class="t " style="top:644.0px;left:362.5px;letter-spacing:0.19px;">2024-03-25 <span class="k" style="width:24.1px">오전</span> ...</div>
<svg class="b" style="left:10px;top:662.2px;" width="15" height="12" viewBox="0 0 15 12"><defs><linearGradient id="fg14" x1="0" y1="0" x2="1" y2="1"><stop offset="0" stop-color="#ffe69c"/><stop offset="1" stop-color="#fcc436"/></linearGradient></defs><path d="M0.2 1.2Q0.2 0.2 1.2 0.2H5.2Q6 0.2 6.6 0.9L7.2 1.6H13.8Q14.8 1.6 14.8 2.6V10.8Q14.8 11.8 13.8 11.8H1.2Q0.2 11.8 0.2 10.8Z" fill="#efa80a"/><path d="M0.2 3.4Q0.2 2.6 1.2 2.6H6.2L7.4 1.9H13.8Q14.8 1.9 14.8 2.9V10.6Q14.8 11.4 13.8 11.4H1.2Q0.2 11.4 0.2 10.6Z" fill="url(#fg14)"/></svg>
<div class="t " style="top:662.0px;left:27.3px;letter-spacing:-0.73px;">Users</div>
<div class="t " style="top:662.0px;left:248.5px;"><span class="k" style="width:51.2px">파일 폴더</span></div>
<div class="t " style="top:662.0px;left:362.5px;letter-spacing:0.25px;">2023-11-28 <span class="k" style="width:24.1px">오후</span> ...</div>
<svg class="b" style="left:10px;top:680.2px;" width="15" height="12" viewBox="0 0 15 12"><defs><linearGradient id="fg15" x1="0" y1="0" x2="1" y2="1"><stop offset="0" stop-color="#ffe69c"/><stop offset="1" stop-color="#fcc436"/></linearGradient></defs><path d="M0.2 1.2Q0.2 0.2 1.2 0.2H5.2Q6 0.2 6.6 0.9L7.2 1.6H13.8Q14.8 1.6 14.8 2.6V10.8Q14.8 11.8 13.8 11.8H1.2Q0.2 11.8 0.2 10.8Z" fill="#efa80a"/><path d="M0.2 3.4Q0.2 2.6 1.2 2.6H6.2L7.4 1.9H13.8Q14.8 1.9 14.8 2.9V10.6Q14.8 11.4 13.8 11.4H1.2Q0.2 11.4 0.2 10.6Z" fill="url(#fg15)"/></svg>
<div class="t " style="top:680.0px;left:27.3px;letter-spacing:-0.01px;">Windows</div>
<div class="t " style="top:680.0px;left:248.5px;"><span class="k" style="width:51.2px">파일 폴더</span></div>
<div class="t " style="top:680.0px;left:362.5px;letter-spacing:0.19px;">2024-02-29 <span class="k" style="width:24.1px">오후</span> ...</div>
<svg class="b" style="left:11.7px;top:696.9000000000001px;" width="12" height="15" viewBox="0 0 12 15"><path d="M0.5 0.5H7.4L10.7 3.8V14.5H0.5Z" fill="#fafafa" stroke="#757575" stroke-width="1"/><path d="M7.4 0.5V3.8H10.7" fill="none" stroke="#757575" stroke-width="1"/></svg>
<div class="t " style="top:698.0px;left:27.3px;letter-spacing:0.10px;">DumpStack.log.tmp</div>
<div class="t " style="top:698.0px;left:-62.0px;width:300px;text-align:right;">12,288</div>
<div class="t " style="top:698.0px;left:248.5px;">TMP <span class="k" style="width:24.1px">파일</span></div>
<div class="t " style="top:698.0px;left:362.5px;letter-spacing:0.19px;">2024-03-04 <span class="k" style="width:24.1px">오전</span> ...</div>
<svg class="b" style="left:11.7px;top:714.9000000000001px;" width="12" height="15" viewBox="0 0 12 15"><path d="M0.5 0.5H7.4L10.7 3.8V14.5H0.5Z" fill="#fafafa" stroke="#8a8a8a" stroke-width="1"/><path d="M7.4 0.5V3.8H10.7" fill="none" stroke="#8a8a8a" stroke-width="1"/><circle cx="4.6" cy="6.6" r="1.9" fill="none" stroke="#a9b0b8" stroke-width="1.5"/><circle cx="7.2" cy="10.2" r="1.5" fill="none" stroke="#9aa1a9" stroke-width="1.3"/></svg>
<div class="t " style="top:716.0px;left:27.3px;letter-spacing:-0.11px;">hiberfil.sys</div>
<div class="t " style="top:716.0px;left:-62.0px;width:300px;text-align:right;">6,839,189,...</div>
<div class="t " style="top:716.0px;left:248.5px;"><span class="k" style="width:63.2px">시스템 파일</span></div>
<div class="t " style="top:716.0px;left:362.5px;letter-spacing:0.19px;">2024-03-27 <span class="k" style="width:24.1px">오전</span> ...</div>
<svg class="b" style="left:11.7px;top:732.9000000000001px;" width="12" height="15" viewBox="0 0 12 15"><path d="M0.5 0.5H7.4L10.7 3.8V14.5H0.5Z" fill="#fafafa" stroke="#8a8a8a" stroke-width="1"/><path d="M7.4 0.5V3.8H10.7" fill="none" stroke="#8a8a8a" stroke-width="1"/><circle cx="4.6" cy="6.6" r="1.9" fill="none" stroke="#a9b0b8" stroke-width="1.5"/><circle cx="7.2" cy="10.2" r="1.5" fill="none" stroke="#9aa1a9" stroke-width="1.3"/></svg>
<div class="t " style="top:734.0px;left:27.3px;letter-spacing:-0.25px;">pagefile.sys</div>
<div class="t " style="top:734.0px;left:-62.0px;width:300px;text-align:right;">1,073,741,...</div>
<div class="t " style="top:734.0px;left:248.5px;"><span class="k" style="width:63.2px">시스템 파일</span></div>
<div class="t " style="top:734.0px;left:362.5px;letter-spacing:0.19px;">2024-03-13 <span class="k" style="width:24.1px">오후</span> ...</div>
<svg class="b" style="left:11.7px;top:750.9000000000001px;" width="12" height="15" viewBox="0 0 12 15"><path d="M0.5 0.5H7.4L10.7 3.8V14.5H0.5Z" fill="#fafafa" stroke="#8a8a8a" stroke-width="1"/><path d="M7.4 0.5V3.8H10.7" fill="none" stroke="#8a8a8a" stroke-width="1"/><circle cx="4.6" cy="6.6" r="1.9" fill="none" stroke="#a9b0b8" stroke-width="1.5"/><circle cx="7.2" cy="10.2" r="1.5" fill="none" stroke="#9aa1a9" stroke-width="1.3"/></svg>
<div class="t " style="top:752.0px;left:27.3px;letter-spacing:-0.27px;">swapfile.sys</div>
<div class="t " style="top:752.0px;left:-62.0px;width:300px;text-align:right;">16,777,216</div>
<div class="t " style="top:752.0px;left:248.5px;"><span class="k" style="width:63.2px">시스템 파일</span></div>
<div class="t " style="top:752.0px;left:362.5px;letter-spacing:0.19px;">2024-03-04 <span class="k" style="width:24.1px">오전</span> ...</div>
<div class="b " style="left:727.3px;top:529px;width:1px;height:23px;background:#e5e5e5;"></div>
<div class="b " style="left:799.5px;top:529px;width:1px;height:23px;background:#e5e5e5;"></div>
<div class="b " style="left:875px;top:529px;width:1px;height:23px;background:#e5e5e5;"></div>
<div class="b " style="left:970px;top:529px;width:1px;height:23px;background:#e5e5e5;"></div>
<div class="b " style="left:1045.5px;top:529px;width:1px;height:23px;background:#e5e5e5;"></div>
<div class="b " style="left:1126.5px;top:529px;width:1px;height:23px;background:#e5e5e5;"></div>
<div class="t " style="top:533.0px;left:592.3px;"><span class="k" style="width:36.2px">파일명</span></div>
<div class="t " style="top:533.0px;left:493.0px;width:300px;text-align:right;"><span class="k" style="width:24.1px">크기</span></div>
<div class="t " style="top:533.0px;left:806.0px;"><span class="k" style="width:51.2px">파일 유형</span></div>
<div class="t " style="top:533.0px;left:881.9px;"><span class="k" style="width:51.2px">최종 수정</span></div>
<div class="t " style="top:533.0px;left:977.4px;"><span class="k" style="width:24.1px">권한</span></div>
<div class="t " style="top:533.0px;left:1052.8px;letter-spacing:-1.20px;"><span class="k" style="width:36.2px">소유자</span>/<span class="k" style="width:24.1px">그룹</span></div>
<svg class="b" style="left:654px;top:530px;" width="8" height="4" viewBox="0 0 8 4"><path d="M0.3 0.3L4 3.6L7.7 0.3" fill="none" stroke="#aaa" stroke-width="1"/></svg>
<svg class="b" style="left:590.3px;top:554.5px;" width="15" height="12" viewBox="0 0 15 12"><defs><linearGradient id="fg20" x1="0" y1="0" x2="1" y2="1"><stop offset="0" stop-color="#ffe69c"/><stop offset="1" stop-color="#fcc436"/></linearGradient></defs><path d="M0.2 1.2Q0.2 0.2 1.2 0.2H5.2Q6 0.2 6.6 0.9L7.2 1.6H13.8Q14.8 1.6 14.8 2.6V10.8Q14.8 11.8 13.8 11.8H1.2Q0.2 11.8 0.2 10.8Z" fill="#efa80a"/><path d="M0.2 3.4Q0.2 2.6 1.2 2.6H6.2L7.4 1.9H13.8Q14.8 1.9 14.8 2.9V10.6Q14.8 11.4 13.8 11.4H1.2Q0.2 11.4 0.2 10.6Z" fill="url(#fg20)"/></svg>
<div class="t " style="top:554.0px;left:607.7px;">..</div>
<svg class="b" style="left:592.0px;top:571.2px;" width="12" height="15" viewBox="0 0 12 15"><path d="M0.5 0.5H7.4L10.7 3.8V14.5H0.5Z" fill="#fafafa" stroke="#757575" stroke-width="1"/><path d="M7.4 0.5V3.8H10.7" fill="none" stroke="#757575" stroke-width="1"/></svg>
<div class="t " style="top:572.0px;left:607.7px;letter-spacing:-0.18px;">.htpasswd</div>
<div class="t " style="top:572.0px;left:494.0px;width:300px;text-align:right;">44</div>
<div class="t " style="top:572.0px;left:805.7px;letter-spacing:-0.18px;">HTPASSW...</div>
<div class="t " style="top:572.0px;left:881.0px;letter-spacing:0.26px;">2024-01-18 ...</div>
<div class="t " style="top:572.0px;left:976.7px;letter-spacing:0.03px;">adfrw (064...</div>
<div class="t " style="top:572.0px;left:1052.0px;letter-spacing:0.12px;">ttest hosting</div>
<svg class="b" style="left:592.0px;top:589.8px;" width="11" height="13" viewBox="0 0 11 13"><path d="M0.5 0.5H7.3L10.3 3.5V12.5H0.5Z" fill="#fbfbfb" stroke="#d2d2d2" stroke-width="1"/><path d="M7.3 0.5V3.5H10.3" fill="none" stroke="#d2d2d2" stroke-width="1"/><rect x="2.1" y="3.9" width="6.6" height="6.3" fill="#3a4a52"/><path d="M3.2 5.6H6.2M3.2 7.4H7.2M3.2 8.8H6.6" stroke="#7f8f97" stroke-width="0.7"/></svg>
<div class="t " style="top:590.0px;left:607.7px;letter-spacing:-0.26px;">.bashrc</div>
<div class="t " style="top:590.0px;left:494.0px;width:300px;text-align:right;">376</div>
<div class="t " style="top:590.0px;left:805.7px;letter-spacing:-0.53px;">Bash RC ...</div>
<div class="t " style="top:590.0px;left:881.0px;letter-spacing:0.26px;">2022-08-02 ...</div>
<div class="t " style="top:590.0px;left:976.7px;letter-spacing:0.03px;">adfrw (064...</div>
<div class="t " style="top:590.0px;left:1052.0px;letter-spacing:0.12px;">ttest hosting</div>
<svg class="b" style="left:592.0px;top:607.8px;" width="11" height="13" viewBox="0 0 11 13"><path d="M0.5 0.5H7.3L10.3 3.5V12.5H0.5Z" fill="#fbfbfb" stroke="#d2d2d2" stroke-width="1"/><path d="M7.3 0.5V3.5H10.3" fill="none" stroke="#d2d2d2" stroke-width="1"/><rect x="2.1" y="3.9" width="6.6" height="6.3" fill="#3a4a52"/><path d="M3.2 5.6H6.2M3.2 7.4H7.2M3.2 8.8H6.6" stroke="#7f8f97" stroke-width="0.7"/></svg>
<div class="t " style="top:608.0px;left:607.7px;letter-spacing:-0.16px;">.bash_profile</div>
<div class="t " style="top:608.0px;left:494.0px;width:300px;text-align:right;">141</div>
<div class="t " style="top:608.0px;left:805.7px;letter-spacing:-0.14px;">Bash Profil...</div>
<div class="t " style="top:608.0px;left:881.0px;letter-spacing:0.26px;">2022-08-02 ...</div>
<div class="t " style="top:608.0px;left:976.7px;letter-spacing:0.03px;">adfrw (064...</div>
<div class="t " style="top:608.0px;left:1052.0px;letter-spacing:0.12px;">ttest hosting</div>
<svg class="b" style="left:592.0px;top:625.8px;" width="11" height="13" viewBox="0 0 11 13"><path d="M0.5 0.5H7.3L10.3 3.5V12.5H0.5Z" fill="#fbfbfb" stroke="#d2d2d2" stroke-width="1"/><path d="M7.3 0.5V3.5H10.3" fill="none" stroke="#d2d2d2" stroke-width="1"/><rect x="2.1" y="3.9" width="6.6" height="6.3" fill="#3a4a52"/><path d="M3.2 5.6H6.2M3.2 7.4H7.2M3.2 8.8H6.6" stroke="#7f8f97" stroke-width="0.7"/></svg>
<div class="t " style="top:626.0px;left:607.7px;letter-spacing:-0.07px;">.bash_logout</div>
<div class="t " style="top:626.0px;left:494.0px;width:300px;text-align:right;">18</div>
<div class="t " style="top:626.0px;left:805.7px;letter-spacing:-0.11px;">Bash Logo...</div>
<div class="t " style="top:626.0px;left:881.0px;letter-spacing:0.26px;">2022-08-02 ...</div>
<div class="t " style="top:626.0px;left:976.7px;letter-spacing:0.03px;">adfrw (064...</div>
<div class="t " style="top:626.0px;left:1052.0px;letter-spacing:0.12px;">ttest hosting</div>
<svg class="b" style="left:590.3px;top:644.5px;" width="15" height="12" viewBox="0 0 15 12"><defs><linearGradient id="fg25" x1="0" y1="0" x2="1" y2="1"><stop offset="0" stop-color="#ffe69c"/><stop offset="1" stop-color="#fcc436"/></linearGradient></defs><path d="M0.2 1.2Q0.2 0.2 1.2 0.2H5.2Q6 0.2 6.6 0.9L7.2 1.6H13.8Q14.8 1.6 14.8 2.6V10.8Q14.8 11.8 13.8 11.8H1.2Q0.2 11.8 0.2 10.8Z" fill="#efa80a"/><path d="M0.2 3.4Q0.2 2.6 1.2 2.6H6.2L7.4 1.9H13.8Q14.8 1.9 14.8 2.9V10.6Q14.8 11.4 13.8 11.4H1.2Q0.2 11.4 0.2 10.6Z" fill="url(#fg25)"/></svg>
<div class="t " style="top:644.0px;left:607.7px;letter-spacing:0.44px;">html</div>
<div class="t " style="top:644.0px;left:805.7px;"><span class="k" style="width:51.2px">파일 폴더</span></div>
<div class="t " style="top:644.0px;left:881.0px;letter-spacing:0.26px;">2023-10-06 ...</div>
<div class="t " style="top:644.0px;left:976.7px;letter-spacing:0.08px;">flcdmpe (0...</div>
<div class="t " style="top:644.0px;left:1052.0px;letter-spacing:0.12px;">ttest hosting</div>
<svg class="b" style="left:590.3px;top:662.5px;" width="15" height="12" viewBox="0 0 15 12"><defs><linearGradient id="fg26" x1="0" y1="0" x2="1" y2="1"><stop offset="0" stop-color="#ffe69c"/><stop offset="1" stop-color="#fcc436"/></linearGradient></defs><path d="M0.2 1.2Q0.2 0.2 1.2 0.2H5.2Q6 0.2 6.6 0.9L7.2 1.6H13.8Q14.8 1.6 14.8 2.6V10.8Q14.8 11.8 13.8 11.8H1.2Q0.2 11.8 0.2 10.8Z" fill="#efa80a"/><path d="M0.2 3.4Q0.2 2.6 1.2 2.6H6.2L7.4 1.9H13.8Q14.8 1.9 14.8 2.9V10.6Q14.8 11.4 13.8 11.4H1.2Q0.2 11.4 0.2 10.6Z" fill="url(#fg26)"/></svg>
<div class="t " style="top:662.0px;left:607.7px;letter-spacing:-0.16px;">.webalizer</div>
<div class="t " style="top:662.0px;left:805.7px;"><span class="k" style="width:51.2px">파일 폴더</span></div>
<div class="t " style="top:662.0px;left:881.0px;letter-spacing:0.26px;">2023-10-06 ...</div>
<div class="t " style="top:662.0px;left:976.7px;letter-spacing:0.08px;">flcdmpe (0...</div>
<div class="t " style="top:662.0px;left:1052.0px;letter-spacing:0.12px;">ttest hosting</div>
<div class="b " style="left:6px;top:771px;width:573px;height:1px;background:#dcdcdc;"></div>
<div class="b " style="left:586px;top:771px;width:561px;height:1px;background:#dcdcdc;"></div>
<div class="b " style="left:6px;top:772px;width:573px;height:21px;background:#f0f0f0;"></div>
<div class="b " style="left:586px;top:772px;width:561px;height:21px;background:#f0f0f0;"></div>
<div class="t " style="top:776.0px;left:7.6px;letter-spacing:0.27px;">4 <span class="k" style="width:37.6px">파일 및</span> 12 <span class="k" style="width:44.8px">디렉터리</span>. <span class="k" style="width:37.6px">총 크기</span>: 7,929,720,832 <span class="k" style="width:33.6px">바이트</span></div>
<div class="t " style="top:776.0px;left:587.6px;letter-spacing:0.47px;">4 <span class="k" style="width:37.6px">파일 및</span> 2 <span class="k" style="width:44.8px">디렉터리</span>. <span class="k" style="width:37.6px">총 크기</span>: 579 <span class="k" style="width:33.6px">바이트</span></div>
<div class="b " style="left:6px;top:793px;width:1141px;height:1px;background:#e4e4e4;"></div>
<div class="b " style="left:6px;top:794px;width:1141px;height:1px;background:#fdfdfd;"></div>
<div class="b " style="left:6px;top:795px;width:1141px;height:3px;background:#f0f0f0;"></div>
<div class="b " style="left:6px;top:798px;width:1141px;height:2px;background:#b4b6ba;"></div>
<div class="b " style="left:176.5px;top:801px;width:1px;height:22px;background:#e5e5e5;"></div>
<div class="b " style="left:233.7px;top:801px;width:1px;height:22px;background:#e5e5e5;"></div>
<div class="b " style="left:403.5px;top:801px;width:1px;height:22px;background:#e5e5e5;"></div>
<div class="b " style="left:479.5px;top:801px;width:1px;height:22px;background:#e5e5e5;"></div>
<div class="b " style="left:536.5px;top:801px;width:1px;height:22px;background:#e5e5e5;"></div>
<div class="b " style="left:678.5px;top:801px;width:1px;height:22px;background:#e5e5e5;"></div>
<div class="t " style="top:805.0px;left:12.1px;"><span class="k" style="width:22.4px">서버</span>/<span class="k" style="width:48.8px">로컬 파일</span></div>
<div class="t " style="top:805.0px;left:-82.7px;width:300px;text-align:right;"><span class="k" style="width:22.4px">방향</span></div>
<div class="t " style="top:805.0px;left:239.7px;"><span class="k" style="width:60.0px">리모트 파일</span></div>
<div class="t " style="top:805.0px;left:174.5px;width:300px;text-align:right;"><span class="k" style="width:22.4px">크기</span></div>
<div class="t " style="top:805.0px;left:485.7px;"><span class="k" style="width:22.4px">우선</span> ...</div>
<div class="t " style="top:805.0px;left:543.4px;"><span class="k" style="width:22.4px">상태</span></div>
<div class="b " style="left:6px;top:896px;width:1141px;height:2px;background:#9c9ca0;"></div>
<div class="b " style="left:6px;top:898px;width:1141px;height:2px;background:#f6f6f6;"></div>
<div class="b " style="left:6px;top:900px;width:1141px;height:1px;background:#a9a9a9;"></div>
<div class="b " style="left:6px;top:901px;width:1141px;height:22px;background:linear-gradient(#cacaca,#dcdcdc 45%,#efefef)"></div>
<div class="b " style="left:9.5px;top:900px;width:64px;height:19.5px;background:linear-gradient(#fff 55%,#e9e9e9);border:1px solid #8e8e8e;border-top:none;border-radius:0 0 4px 4px"></div>
<div class="b " style="left:73.5px;top:900px;width:64px;height:19.5px;background:linear-gradient(#f0f0f0,#dadada);border:1px solid #8e8e8e;border-top:none;border-left:none;border-radius:0 0 4px 4px"></div>
<div class="b " style="left:137.5px;top:900px;width:64.5px;height:19.5px;background:linear-gradient(#f0f0f0,#dadada);border:1px solid #8e8e8e;border-top:none;border-left:none;border-radius:0 0 4px 4px"></div>
<div class="t bd" style="top:901.0px;left:16.7px;"><span class="k" style="width:48.8px">대기 파일</span></div>
<div class="t " style="top:901.0px;left:81.8px;"><span class="k" style="width:48.8px">전송 실패</span></div>
<div class="t " style="top:901.0px;left:145.5px;"><span class="k" style="width:48.8px">전송 성공</span></div>
<div class="b " style="left:6px;top:923px;width:1141px;height:1px;background:#d9d9d9;"></div>
<div class="b " style="left:6px;top:924px;width:1141px;height:20px;background:#f0f0f0;"></div>
<div class="b " style="left:1103px;top:926px;width:1px;height:17px;background:#cfcfcf;"></div>
<div class="t " style="top:928.0px;left:984.7px;"><span class="k" style="width:33.6px">대기열</span>: <span class="k" style="width:33.6px">비었음</span></div>
<svg class="b" style="left:1111.8px;top:928.7px;" width="10" height="10" viewBox="0 0 10 10"><defs><radialGradient id="lg27" cx="0.45" cy="0.3" r="0.7"><stop offset="0" stop-color="#8fd08f"/><stop offset="0.55" stop-color="#0e7a0e"/><stop offset="1" stop-color="#064f06"/></radialGradient></defs><circle cx="5" cy="5" r="4.7" fill="url(#lg27)"/></svg>
<svg class="b" style="left:1126.5px;top:928.7px;" width="10" height="10" viewBox="0 0 10 10"><defs><radialGradient id="lg28" cx="0.45" cy="0.3" r="0.7"><stop offset="0" stop-color="#d09a9a"/><stop offset="0.55" stop-color="#7a1010"/><stop offset="1" stop-color="#4a0505"/></radialGradient></defs><circle cx="5" cy="5" r="4.7" fill="url(#lg28)"/></svg>
<svg class="b" style="left:941.5px;top:926.5px;" width="15" height="15" viewBox="0 0 15 15"><g transform="translate(7.5 7.5)"><rect x="-1.6" y="-7.2" width="3.2" height="3" rx="0.6" transform="rotate(0)" fill="#4a4a4a"/><rect x="-1.6" y="-7.2" width="3.2" height="3" rx="0.6" transform="rotate(60)" fill="#4a4a4a"/><rect x="-1.6" y="-7.2" width="3.2" height="3" rx="0.6" transform="rotate(120)" fill="#4a4a4a"/><rect x="-1.6" y="-7.2" width="3.2" height="3" rx="0.6" transform="rotate(180)" fill="#4a4a4a"/><rect x="-1.6" y="-7.2" width="3.2" height="3" rx="0.6" transform="rotate(240)" fill="#4a4a4a"/><rect x="-1.6" y="-7.2" width="3.2" height="3" rx="0.6" transform="rotate(300)" fill="#4a4a4a"/><circle r="5.3" fill="#4a4a4a"/><circle r="3.7" fill="#f4f4f4"/><path d="M-2 2.3L0 -2.6L2 2.3M-1.2 0.7H1.2" fill="none" stroke="#1fb31f" stroke-width="1.3"/></g></svg>
<svg class="b" style="left:960.5px;top:927px;" width="14" height="14" viewBox="0 0 14 14"><circle cx="7" cy="7" r="6.3" fill="#f6f6f6" stroke="#707070" stroke-width="1.3"/><circle cx="7" cy="7" r="4.3" fill="none" stroke="#c4c4c4" stroke-width="1"/><path d="M6.3 9.2L10 4.2" stroke="#555" stroke-width="1.4"/></svg>
</body></html>
